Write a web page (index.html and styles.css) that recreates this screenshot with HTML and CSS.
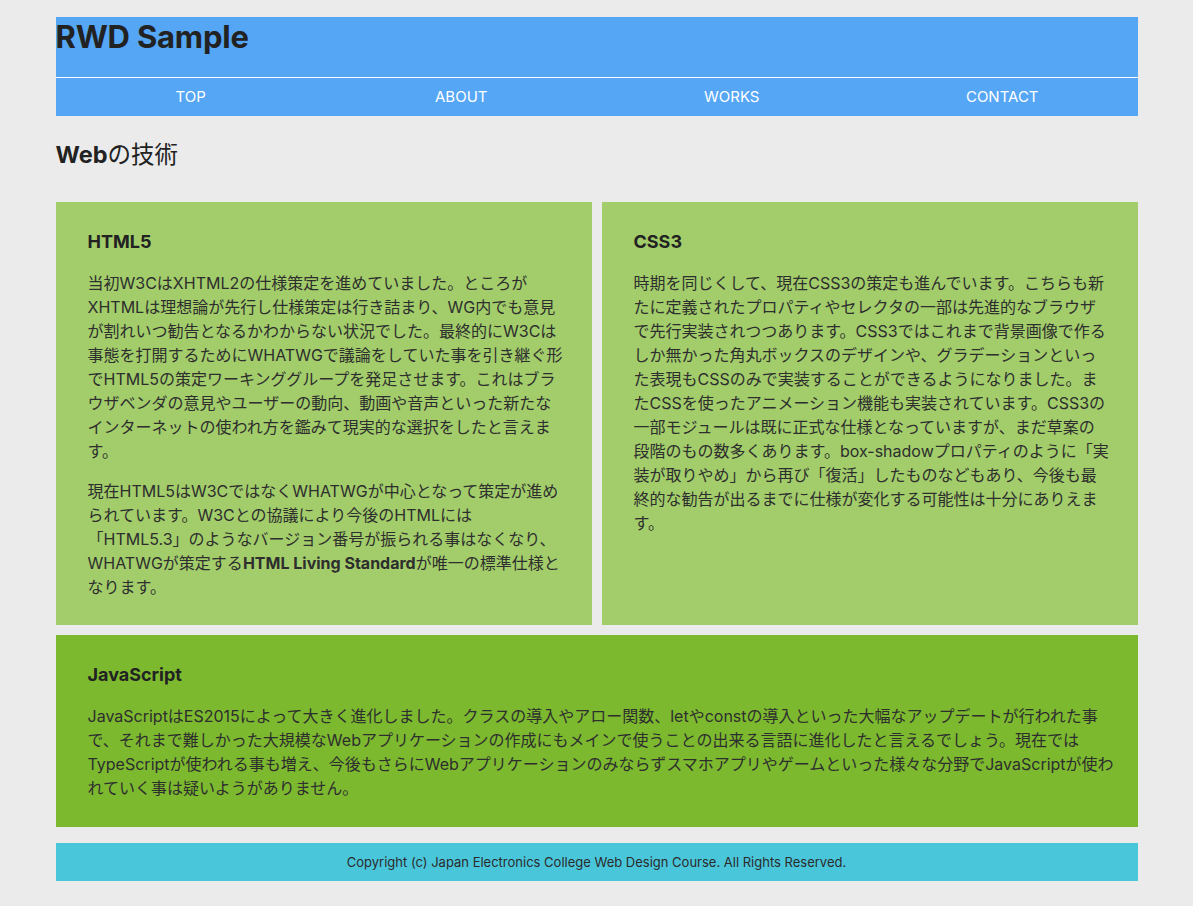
FILE: index.html
```html
<!DOCTYPE html>
<html lang="ja">
<head>
<meta charset="utf-8">
<title>RWD Sample</title>
<link rel="stylesheet" href="styles.css">
</head>
<body>
<div class="page">
  <header class="site-header">
    <h1 class="site-title">RWD Sample</h1>
  </header>
  <nav class="global-nav">
    <a href="#">TOP</a>
    <a href="#">ABOUT</a>
    <a href="#">WORKS</a>
    <a href="#">CONTACT</a>
  </nav>
  <main>
    <h2 class="page-title"><b>Web</b>の技術</h2>
    <div class="cards">
      <section class="card">
        <h3>HTML5</h3>
        <p>当初W3CはXHTML2の仕様策定を進めていました。ところが<br>XHTMLは理想論が先行し仕様策定は行き詰まり、WG内でも意見<br>が割れいつ勧告となるかわからない状況でした。最終的にW3Cは<br>事態を打開するためにWHATWGで議論をしていた事を引き継ぐ形<br>でHTML5の策定ワーキンググループを発足させます。これはブラ<br>ウザベンダの意見やユーザーの動向、動画や音声といった新たな<br>インターネットの使われ方を鑑みて現実的な選択をしたと言えま<br>す。</p>
        <p>現在HTML5はW3CではなくWHATWGが中心となって策定が進め<br>られています。W3Cとの協議により今後のHTMLには<br>「HTML5.3」のようなバージョン番号が振られる事はなくなり、<br>WHATWGが策定する<strong>HTML Living Standard</strong>が唯一の標準仕様と<br>なります。</p>
      </section>
      <section class="card">
        <h3>CSS3</h3>
        <p>時期を同じくして、現在CSS3の策定も進んでいます。こちらも新<br>たに定義されたプロパティやセレクタの一部は先進的なブラウザ<br>で先行実装されつつあります。CSS3ではこれまで背景画像で作る<br>しか無かった角丸ボックスのデザインや、グラデーションといっ<br>た表現もCSSのみで実装することができるようになりました。ま<br>たCSSを使ったアニメーション機能も実装されています。CSS3の<br>一部モジュールは既に正式な仕様となっていますが、まだ草案の<br>段階のもの数多くあります。box-shadowプロパティのように「実<br>装が取りやめ」から再び「復活」したものなどもあり、今後も最<br>終的な勧告が出るまでに仕様が変化する可能性は十分にありえま<br>す。</p>
      </section>
      <section class="card card-wide">
        <h3>JavaScript</h3>
        <p>JavaScriptはES2015によって大きく進化しました。クラスの導入やアロー関数、letやconstの導入といった大幅なアップデートが行われた事<br>で、それまで難しかった大規模なWebアプリケーションの作成にもメインで使うことの出来る言語に進化したと言えるでしょう。現在では<br>TypeScriptが使われる事も増え、今後もさらにWebアプリケーションのみならずスマホアプリやゲームといった様々な分野でJavaScriptが使わ<br>れていく事は疑いようがありません。</p>
      </section>
    </div>
  </main>
  <footer class="site-footer">
    <p>Copyright (c) Japan Electronics College Web Design Course. All Rights Reserved.</p>
  </footer>
</div>
</body>
</html>
```
FILE: styles.css
```css
* { box-sizing: border-box; }

html, body {
  margin: 0;
  padding: 0;
  background: #ebebeb;
}

body {
  font-family: Inter, "Noto Sans CJK JP", sans-serif;
  color: #2b2b2b;
}

.page {
  max-width: 1082px;
  margin: 0 auto;
  padding: 17px 0 25px;
}

.site-header {
  background: #55a6f5;
  height: 61px;
  border-bottom: 1px solid #ffffff;
}

.site-title {
  margin: 0;
  font-size: 31px;
  line-height: 40px;
  font-weight: 700;
  color: #222;
  letter-spacing: -0.2px;
}

.global-nav {
  display: grid;
  grid-template-columns: repeat(4, 1fr);
  background: #55a6f5;
  height: 38px;
}

.global-nav a {
  color: #ffffff;
  text-decoration: none;
  text-align: center;
  font-size: 15px;
  line-height: 37px;
}

.page-title {
  margin: 23px 0 31px;
  font-size: 23.5px;
  line-height: 32px;
  font-weight: 400;
  color: #222;
}

.page-title b { font-weight: 700; }

.cards {
  display: grid;
  grid-template-columns: 1fr 1fr;
  gap: 10px;
}

.card {
  background: #a2cd6a;
  padding: 28px 18px 26px 32px;
}

.card-wide {
  grid-column: 1 / -1;
  background: #7cb92f;
  padding-bottom: 27px;
}

.card h3 {
  margin: 0 0 17px;
  font-size: 18px;
  line-height: 24px;
  font-weight: 700;
  color: #222;
}

.card p {
  margin: 0 0 16px;
  font-size: 16px;
  line-height: 24px;
  color: #2e2e2e;
}

.card p:last-child { margin-bottom: 0; }

.card strong { font-weight: 700; }

.site-footer {
  margin-top: 16px;
  background: #4ac6db;
  height: 38px;
}

.site-footer p {
  margin: 0;
  text-align: center;
  font-size: 13px;
  line-height: 38px;
  color: #2b2b2b;
}
```
